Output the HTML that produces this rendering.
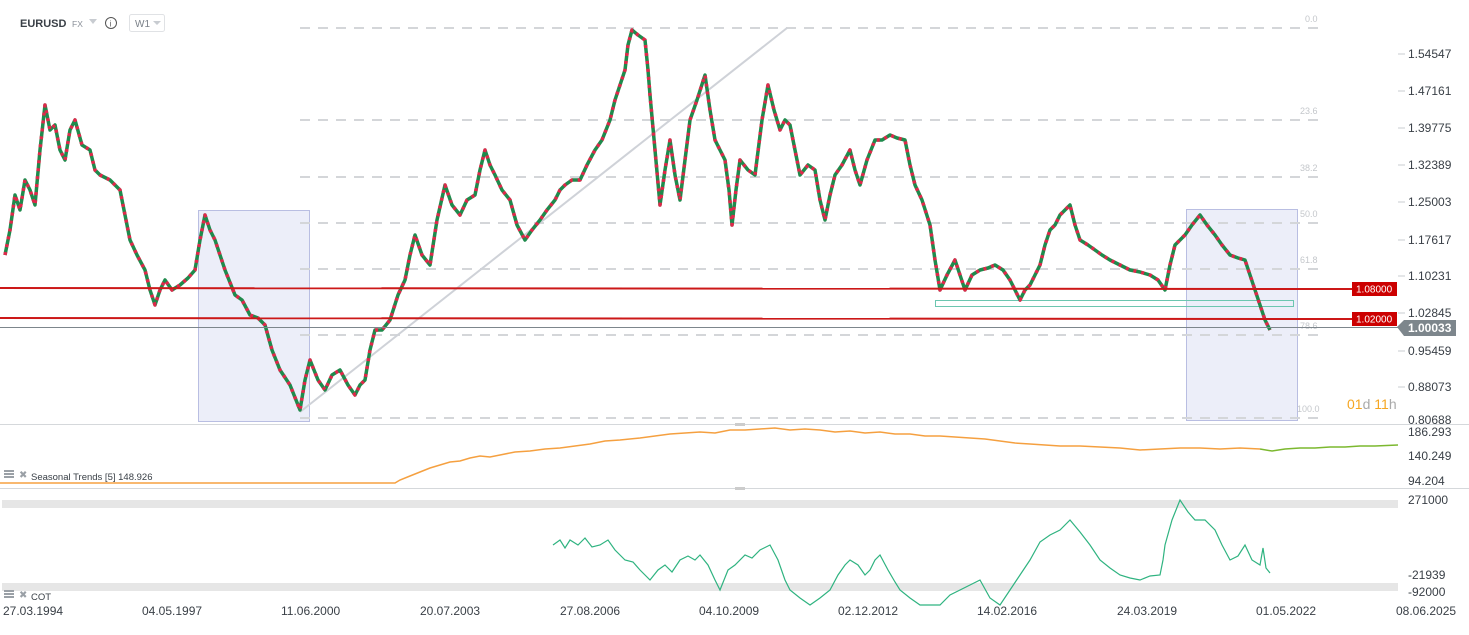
<!DOCTYPE html>
<html><head><meta charset="utf-8"><style>
html,body{margin:0;padding:0;background:#fff;width:1469px;height:635px;overflow:hidden;font-family:"Liberation Sans",sans-serif}
svg text{font-family:"Liberation Sans",sans-serif}
</style></head><body>
<svg width="1469" height="635" xmlns="http://www.w3.org/2000/svg">
<rect width="1469" height="635" fill="#fff"/>
<text x="20" y="27" font-size="11" font-weight="bold" fill="#3a4047">EURUSD</text>
<text x="72" y="27" font-size="8.5" fill="#8a9099">FX</text>
<path d="M89 19 L97 19 L93 24Z" fill="#c8ccd1"/>
<circle cx="111" cy="23" r="5.5" fill="none" stroke="#555" stroke-width="1"/>
<text x="109.5" y="26.5" font-size="8" fill="#555">i</text>
<rect x="129.5" y="14.5" width="35" height="17" rx="2" fill="#fff" stroke="#e0e2e5"/>
<text x="135" y="27" font-size="10" fill="#7a8088">W1</text>
<path d="M153 21 L161 21 L157 25Z" fill="#c8ccd1"/>
<rect x="198.5" y="210.5" width="111" height="211" fill="#eceef9" stroke="#b9bee2"/>
<rect x="1186.5" y="209.5" width="111" height="211" fill="#eceef9" stroke="#b9bee2"/>
<g stroke="#d4d6d9" stroke-width="2" stroke-dasharray="10,8">
<line x1="300" y1="28" x2="1325" y2="28"/><line x1="300" y1="120" x2="1325" y2="120"/>
<line x1="300" y1="177" x2="1325" y2="177"/><line x1="300" y1="223" x2="1325" y2="223"/>
<line x1="300" y1="269" x2="1325" y2="269"/><line x1="300" y1="335" x2="1325" y2="335"/>
<line x1="300" y1="418" x2="1325" y2="418"/></g>
<g font-size="9" fill="#c4c7cb"><text x="1305" y="22">0.0</text><text x="1300" y="114">23.6</text><text x="1300" y="171">38.2</text><text x="1300" y="217">50.0</text><text x="1300" y="263">61.8</text><text x="1300" y="329">78.6</text><text x="1297" y="412">100.0</text></g>
<line x1="300" y1="412" x2="787" y2="28" stroke="#cfd2d8" stroke-width="2"/>
<rect x="935.5" y="300.5" width="358" height="6" fill="none" stroke="#6cc6b0"/>
<g fill="none" stroke-linejoin="round">
<polyline stroke="#1f8a4c" stroke-width="3.5" points="5,255 10,230 15,195 20,210 25,180 30,190 35,205 40,150 45,105 50,130 55,125 60,150 65,160 70,130 75,120 82,145 90,150 95,170 100,175 110,180 120,190 125,215 130,240 137,255 145,270 150,290 155,305 160,290 165,280 172,290 180,285 188,278 195,270 200,240 205,215 210,230 215,240 225,270 235,295 242,300 250,315 258,318 265,325 272,350 280,370 290,385 300,410 305,380 310,360 318,380 325,390 332,375 340,370 348,385 355,395 360,385 365,380 370,350 375,330 382,330 390,320 398,295 405,280 410,255 415,235 422,255 430,265 437,220 445,185 452,205 460,215 467,200 475,195 480,170 485,150 490,165 495,175 502,190 510,200 517,225 525,240 532,230 540,220 547,210 555,200 560,190 565,185 572,180 580,180 587,165 595,150 602,140 610,120 615,100 620,85 625,70 628,45 632,30 638,35 645,40 648,70 650,95 655,150 660,205 665,170 670,140 675,175 680,200 685,160 690,120 697,100 705,75 710,110 715,140 720,150 725,160 729,190 732,225 736,190 740,160 748,170 755,175 762,120 768,85 774,110 780,130 785,120 790,125 795,150 800,175 808,165 815,170 820,200 825,220 830,195 835,175 842,165 850,150 855,170 860,185 867,160 875,140 882,140 890,135 897,138 905,140 910,165 915,185 922,200 930,225 935,260 940,290 947,275 955,260 960,275 965,290 972,275 980,270 988,268 995,265 1003,270 1010,280 1015,290 1020,300 1025,290 1030,285 1035,275 1040,265 1045,245 1050,230 1055,225 1060,215 1065,210 1070,205 1075,225 1080,240 1088,245 1095,250 1102,255 1110,260 1120,265 1130,270 1140,272 1150,275 1158,280 1165,290 1170,265 1175,245 1180,240 1185,235 1192,225 1200,215 1207,225 1215,235 1222,245 1230,255 1238,258 1245,260 1250,275 1255,290 1260,305 1265,320 1270,330"/>
<polyline stroke="#e0284a" stroke-width="3.5" stroke-dasharray="3,5" points="5,255 10,230 15,195 20,210 25,180 30,190 35,205 40,150 45,105 50,130 55,125 60,150 65,160 70,130 75,120 82,145 90,150 95,170 100,175 110,180 120,190 125,215 130,240 137,255 145,270 150,290 155,305 160,290 165,280 172,290 180,285 188,278 195,270 200,240 205,215 210,230 215,240 225,270 235,295 242,300 250,315 258,318 265,325 272,350 280,370 290,385 300,410 305,380 310,360 318,380 325,390 332,375 340,370 348,385 355,395 360,385 365,380 370,350 375,330 382,330 390,320 398,295 405,280 410,255 415,235 422,255 430,265 437,220 445,185 452,205 460,215 467,200 475,195 480,170 485,150 490,165 495,175 502,190 510,200 517,225 525,240 532,230 540,220 547,210 555,200 560,190 565,185 572,180 580,180 587,165 595,150 602,140 610,120 615,100 620,85 625,70 628,45 632,30 638,35 645,40 648,70 650,95 655,150 660,205 665,170 670,140 675,175 680,200 685,160 690,120 697,100 705,75 710,110 715,140 720,150 725,160 729,190 732,225 736,190 740,160 748,170 755,175 762,120 768,85 774,110 780,130 785,120 790,125 795,150 800,175 808,165 815,170 820,200 825,220 830,195 835,175 842,165 850,150 855,170 860,185 867,160 875,140 882,140 890,135 897,138 905,140 910,165 915,185 922,200 930,225 935,260 940,290 947,275 955,260 960,275 965,290 972,275 980,270 988,268 995,265 1003,270 1010,280 1015,290 1020,300 1025,290 1030,285 1035,275 1040,265 1045,245 1050,230 1055,225 1060,215 1065,210 1070,205 1075,225 1080,240 1088,245 1095,250 1102,255 1110,260 1120,265 1130,270 1140,272 1150,275 1158,280 1165,290 1170,265 1175,245 1180,240 1185,235 1192,225 1200,215 1207,225 1215,235 1222,245 1230,255 1238,258 1245,260 1250,275 1255,290 1260,305 1265,320 1270,330"/>
</g>
<line x1="0" y1="327.5" x2="1400" y2="327.5" stroke="#7d868c" stroke-width="1"/>
<line x1="0" y1="288" x2="1352" y2="289" stroke="#cc1818" stroke-width="2"/>
<line x1="0" y1="318" x2="1352" y2="319" stroke="#cc1818" stroke-width="2"/>
<rect x="1352" y="282" width="45" height="14" fill="#cc0000"/><text x="1356" y="292.5" font-size="10" fill="#fff">1.08000</text>
<rect x="1352" y="312" width="45" height="14" fill="#cc0000"/><text x="1356" y="322.5" font-size="10" fill="#fff">1.02000</text>
<path d="M1397 327 L1404 320 L1456 320 L1456 336 L1404 336Z" fill="#7d868c"/>
<text x="1408" y="332" font-size="12" font-weight="bold" fill="#fff">1.00033</text>
<g font-size="12" fill="#3a4047">
<text x="1408" y="58">1.54547</text><text x="1408" y="95">1.47161</text><text x="1408" y="132">1.39775</text><text x="1408" y="169">1.32389</text><text x="1408" y="206">1.25003</text><text x="1408" y="244">1.17617</text><text x="1408" y="280">1.10231</text><text x="1408" y="317">1.02845</text><text x="1408" y="355">0.95459</text><text x="1408" y="391">0.88073</text><text x="1408" y="424">0.80688</text>
<text x="1408" y="436">186.293</text><text x="1408" y="460">140.249</text><text x="1408" y="485">94.204</text>
<text x="1408" y="504">271000</text><text x="1408" y="579">-21939</text><text x="1408" y="596">-92000</text>
</g>
<g stroke="#c8ccd1"><line x1="1398" y1="54" x2="1405" y2="54"/><line x1="1398" y1="91" x2="1405" y2="91"/><line x1="1398" y1="128" x2="1405" y2="128"/><line x1="1398" y1="165" x2="1405" y2="165"/><line x1="1398" y1="202" x2="1405" y2="202"/><line x1="1398" y1="240" x2="1405" y2="240"/><line x1="1398" y1="276" x2="1405" y2="276"/><line x1="1398" y1="313" x2="1405" y2="313"/><line x1="1398" y1="351" x2="1405" y2="351"/><line x1="1398" y1="387" x2="1405" y2="387"/></g>
<text x="1347" y="409" font-size="14" fill="#f5a623">01<tspan fill="#aaa">d </tspan>11<tspan fill="#aaa">h</tspan></text>
<line x1="0" y1="424.5" x2="1469" y2="424.5" stroke="#d5d8db"/>
<line x1="0" y1="488.5" x2="1469" y2="488.5" stroke="#d5d8db"/>
<rect x="735" y="423" width="10" height="3" fill="#ccc"/><rect x="735" y="487" width="10" height="3" fill="#ccc"/>
<polyline fill="none" stroke="#f5a040" stroke-width="1.5" points="0,483 395,483 400,480 410,476 420,472 430,468 440,465 450,462 460,461 470,458 480,456 490,457 500,455 515,452 530,451 545,449 560,448 575,446 590,444 605,441 620,440 640,438 655,436 670,434 685,433 700,432 715,433 730,430 745,430 760,429 775,428 790,430 805,429 820,430 835,432 850,431 865,433 880,432 895,434 910,434 925,436 940,436 955,437 970,438 985,439 1000,441 1015,443 1030,444 1045,445 1060,446 1080,446 1100,447 1120,448 1140,450 1160,449 1180,448 1200,448 1220,449 1240,448 1260,449"/>
<polyline fill="none" stroke="#7cb82f" stroke-width="1.5" points="1260,449 1272,451 1285,449 1300,448 1315,448 1330,447 1345,447 1360,446 1375,446 1398,445"/>
<g fill="#9aa0a6"><rect x="4" y="470" width="10" height="2"/><rect x="4" y="473" width="10" height="2"/><rect x="4" y="476" width="10" height="2"/></g>
<text x="19" y="478" font-size="10" fill="#9aa0a6">✖</text>
<text x="31" y="480" font-size="9.5" fill="#3a4047">Seasonal  Trends  [5]  148.926</text>
<rect x="2" y="500" width="1396" height="8" fill="#e6e6e6"/>
<rect x="2" y="583" width="1396" height="8" fill="#e6e6e6"/>
<polyline fill="none" stroke="#2fb380" stroke-width="1.2" points="553,545 560,540 565,548 570,540 578,545 585,538 592,547 600,545 608,540 615,550 625,560 633,562 640,570 650,580 658,570 665,565 672,572 680,560 688,556 695,560 700,555 708,565 715,580 720,590 728,570 735,565 745,555 752,558 760,550 770,545 778,560 785,580 790,590 800,598 810,605 820,598 830,590 838,575 845,565 850,560 858,565 865,575 870,570 875,560 880,555 888,570 895,582 900,590 910,598 920,605 940,605 950,595 960,590 970,585 980,580 990,598 1000,605 1010,590 1020,575 1030,560 1040,542 1050,535 1060,530 1070,520 1080,532 1090,545 1100,560 1110,568 1120,575 1130,578 1140,580 1150,576 1160,575 1163,560 1165,545 1172,520 1180,500 1188,512 1195,520 1205,520 1215,530 1222,545 1230,560 1238,556 1245,545 1252,560 1260,565 1263,548 1266,568 1270,573"/>
<g fill="#9aa0a6"><rect x="4" y="590" width="10" height="2"/><rect x="4" y="593" width="10" height="2"/><rect x="4" y="596" width="10" height="2"/></g>
<text x="19" y="598" font-size="10" fill="#9aa0a6">✖</text>
<text x="31" y="600" font-size="9.5" fill="#3a4047">COT</text>
<g font-size="12" fill="#3a4047">
<text x="3" y="615">27.03.1994</text><text x="142" y="615">04.05.1997</text><text x="281" y="615">11.06.2000</text><text x="420" y="615">20.07.2003</text><text x="560" y="615">27.08.2006</text><text x="699" y="615">04.10.2009</text><text x="838" y="615">02.12.2012</text><text x="977" y="615">14.02.2016</text><text x="1117" y="615">24.03.2019</text><text x="1256" y="615">01.05.2022</text><text x="1396" y="615">08.06.2025</text></g>
</svg>
</body></html>
